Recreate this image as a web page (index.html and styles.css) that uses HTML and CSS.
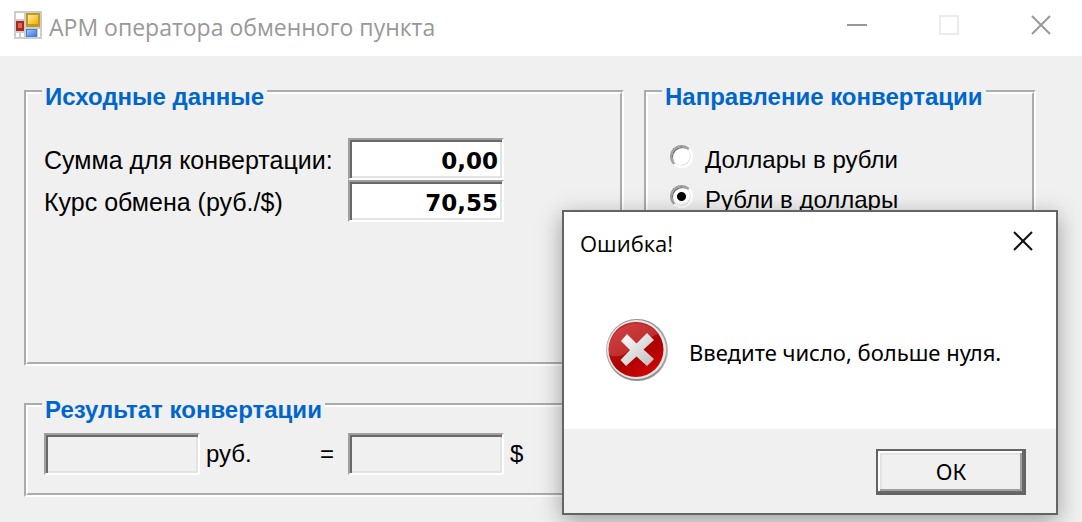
FILE: index.html
```html
<!DOCTYPE html>
<html lang="ru">
<head>
    <meta charset="UTF-8">
    <meta name="viewport" content="width=device-width, initial-scale=1.0">
    <title>АРМ оператора обменного пункта</title>
    <link rel="stylesheet" href="styles.css">
</head>
<body>
    <header class="titlebar">
        <svg class="app-icon" viewBox="0 0 28 28" aria-hidden="true">
            <defs>
                <linearGradient id="gold" x1="0" y1="0" x2="1" y2="1">
                    <stop offset="0" stop-color="#ffe9a0"/>
                    <stop offset="1" stop-color="#f0b000"/>
                </linearGradient>
                <linearGradient id="blue" x1="0" y1="0" x2="1" y2="1">
                    <stop offset="0" stop-color="#9cc4ff"/>
                    <stop offset="1" stop-color="#3d78dc"/>
                </linearGradient>
            </defs>
            <rect width="28" height="28" rx="1" fill="#cdcdcd"/>
            <rect x="2" y="2" width="8" height="6" fill="#fff"/>
            <rect x="2" y="22" width="3" height="4" fill="#fff"/>
            <rect x="7" y="22" width="3" height="4" fill="#fff"/>
            <rect x="24" y="18" width="2" height="8" fill="#fff"/>
            <rect x="12" y="2" width="14" height="14" fill="#c29a20"/>
            <rect x="14" y="4" width="10" height="9" fill="url(#gold)"/>
            <rect x="2" y="10" width="8" height="10" fill="#b0261c"/>
            <rect x="4" y="12" width="4" height="5" fill="#d8665c"/>
            <rect x="12" y="18" width="11" height="8" fill="#4a7fd6"/>
            <rect x="13" y="19" width="9" height="6" fill="url(#blue)"/>
        </svg>
        <h1>АРМ оператора обменного пункта</h1>
        <div class="window-buttons">
            <button type="button" aria-label="Свернуть">
                <svg viewBox="0 0 20 20"><path d="M0 10h20" stroke="#999" stroke-width="2"/></svg>
            </button>
            <button type="button" aria-label="Развернуть" disabled>
                <svg viewBox="0 0 20 20"><rect x="1" y="1" width="18" height="18" fill="none" stroke="#ebebeb" stroke-width="2"/></svg>
            </button>
            <button type="button" aria-label="Закрыть">
                <svg viewBox="0 0 20 20"><path d="M1 1l18 18M19 1L1 19" stroke="#999" stroke-width="2"/></svg>
            </button>
        </div>
    </header>

    <form class="main-form">
        <fieldset class="source">
            <legend>Исходные данные</legend>
            <div class="field">
                <label for="amount">Сумма для конвертации:</label>
                <input type="text" id="amount" name="amount" value="0,00">
            </div>
            <div class="field">
                <label for="rate">Курс обмена (руб./$)</label>
                <input type="text" id="rate" name="rate" value="70,55">
            </div>
        </fieldset>

        <fieldset class="direction">
            <legend>Направление конвертации</legend>
            <label class="option">
                <input type="radio" name="direction" value="usd-rub">
                Доллары в рубли
            </label>
            <label class="option">
                <input type="radio" name="direction" value="rub-usd" checked>
                Рубли в доллары
            </label>
        </fieldset>

        <fieldset class="result">
            <legend>Результат конвертации</legend>
            <div class="result-row">
                <input type="text" id="from" readonly>
                <div class="unit">
                    <label for="from">руб.</label>
                    <span>=</span>
                </div>
                <input type="text" id="to" readonly>
                <label for="to">$</label>
            </div>
        </fieldset>
    </form>

    <div class="dialog" role="alertdialog" aria-labelledby="dialogTitle" aria-describedby="dialogText">
        <div class="dialog-title">
            <h2 id="dialogTitle">Ошибка!</h2>
            <button type="button" aria-label="Закрыть">
                <svg viewBox="0 0 20 20"><path d="M1 1l18 18M19 1L1 19" stroke="#111" stroke-width="2"/></svg>
            </button>
        </div>
        <div class="dialog-body">
            <svg class="error-icon" viewBox="0 0 64 64" aria-hidden="true">
                <defs>
                    <linearGradient id="rim" x1="0" y1="0" x2="0" y2="1">
                        <stop offset="0" stop-color="#8e8e8e"/>
                        <stop offset="0.5" stop-color="#b4b4b4"/>
                        <stop offset="1" stop-color="#8c8c8c"/>
                    </linearGradient>
                    <linearGradient id="red" x1="0.2" y1="0" x2="0.8" y2="1">
                        <stop offset="0" stop-color="#c81e1e"/>
                        <stop offset="0.6" stop-color="#ae0000"/>
                        <stop offset="1" stop-color="#d40808"/>
                    </linearGradient>
                    <linearGradient id="cross" x1="0" y1="0" x2="1" y2="1">
                        <stop offset="0" stop-color="#fff"/>
                        <stop offset="1" stop-color="#bdbdbd"/>
                    </linearGradient>
                </defs>
                <circle cx="32" cy="32" r="31" fill="url(#rim)"/>
                <circle cx="31.500" cy="31.500" r="29.500" fill="#e8e8e8"/>
                <circle cx="31" cy="31.500" r="27.500" fill="url(#red)"/>
                <path d="M4 37a27.500 27.500 0 0 1 49-21C40 21 28 28 21 35c-6 4-11 4-17 2z" fill="#fff" opacity=".16"/>
                <path d="M22 16l9.500 9.500L42 15l7 7-10.500 9.500L49 41l-7 7-10.500-9.500L21 48l-5.500-6L25 32l-9-9z" fill="url(#cross)"/>
            </svg>
            <p id="dialogText">Введите число, больше нуля.</p>
        </div>
        <div class="dialog-footer">
            <button type="button" class="ok">ОК</button>
        </div>
    </div>
</body>
</html>
```
FILE: styles.css
```css
* {
    box-sizing: border-box;
}

body {
    margin: 0;
    min-height: 100vh;
    position: relative;
    background: #f0f0f0;
    color: #000;
    font-family: "Liberation Sans", Arial, sans-serif;
    font-size: 24px;
    line-height: 28px;
}

/* Title bar */
.titlebar {
    display: flex;
    align-items: center;
    height: 56px;
    padding: 0 31px 6px 14px;
    background: #fff;
    color: #999;
}

.titlebar h1,
.dialog-title h2 {
    margin: 0;
    font-family: "Open Sans", "Noto Sans", sans-serif;
    font-size: 23px;
    font-weight: 400;
}

.titlebar h1 {
    flex: 1;
    padding: 4px 0 0 7px;
}

.app-icon {
    width: 28px;
    height: 28px;
}

.window-buttons {
    display: flex;
    gap: 72px;
}

.titlebar button,
.dialog-title button {
    width: 20px;
    height: 20px;
    padding: 0;
    border: none;
    background: none;
}

.titlebar svg,
.dialog-title svg {
    display: block;
}

/* Group boxes */
.main-form {
    display: grid;
    grid-template-columns: 75fr 49fr;
    gap: 22px 20px;
    padding: 19px 46px 24px 24px;
}

fieldset {
    margin: 0;
    min-width: 0;
    border: 4px groove #fff;
    padding: 29px 14px 20px;
}

legend {
    height: 34px;
    padding: 8px 3px 0;
    color: #0066cc;
    font-weight: 700;
}

.source {
    min-height: 291px;
}

.result {
    grid-column: 1 / -1;
    padding-top: 11px;
    padding-bottom: 18px;
}

.field {
    display: flex;
    align-items: center;
    padding-left: 2px;
}

.field label {
    width: 304px;
    padding-top: 2px;
    font-size: 25px;
}

input[type="text"] {
    width: 156px;
    height: 42px;
    padding: 6px 4px 2px;
    border: 2px solid;
    border-color: #a0a0a0 #fff #fff #a0a0a0;
    border-radius: 0;
    background: #fff;
    box-shadow: inset 2px 2px #696969, inset -2px -2px #e3e3e3;
    color: #000;
    font-family: "DejaVu Sans", Verdana, sans-serif;
    font-size: 23px;
    font-weight: 700;
    text-align: right;
}

input[type="text"]:read-only {
    background: #f0f0f0;
}

.direction {
    padding-top: 31px;
}

.option {
    display: flex;
    align-items: center;
    gap: 12px;
    height: 40px;
    padding-left: 8px;
}

input[type="radio"] {
    appearance: none;
    width: 23px;
    height: 23px;
    margin: 0 0 8px;
    border: 2px solid;
    border-color: #a0a0a0 #fff #fff #a0a0a0;
    border-radius: 50%;
    background: #fff;
    box-shadow: inset 1px 1px #696969, inset -1px -1px #e3e3e3;
}

input[type="radio"]:checked {
    background: radial-gradient(circle, #000 4px, #fff 5px);
}

.result-row {
    display: grid;
    grid-template-columns: 156px 148px 156px auto;
    align-items: center;
    padding-left: 2px;
}

.unit {
    display: flex;
    justify-content: space-between;
    padding: 0 14px 0 6px;
}

.result-row > label {
    padding-left: 6px;
}

/* Error message box */
.dialog {
    position: absolute;
    top: 210px;
    right: 24px;
    width: 496px;
    border: 2px solid #646464;
    background: #fff;
    box-shadow: 0 6px 22px rgba(0, 0, 0, 0.35);
}

.dialog-title {
    display: flex;
    align-items: center;
    justify-content: space-between;
    height: 60px;
    padding: 0 23px 2px 16px;
}

.dialog-title h2 {
    padding-top: 4px;
    font-size: 22px;
}

.dialog-body {
    display: flex;
    align-items: center;
    gap: 20px;
    height: 157px;
    padding: 0 41px 2px;
}

.dialog-body p {
    margin: 0;
    padding-top: 4px;
    font-family: "Noto Sans", Tahoma, sans-serif;
    font-size: 22px;
}

.error-icon {
    flex: none;
    width: 64px;
    height: 64px;
}

.dialog-footer {
    display: flex;
    justify-content: flex-end;
    padding: 20px 30px 18px;
    background: #f0f0f0;
}

.ok {
    width: 150px;
    height: 46px;
    padding: 0 0 2px;
    border: 2px solid #646464;
    background: #f0f0f0;
    box-shadow: inset -2px -2px #696969, inset 2px 2px #fff, inset -4px -4px #a0a0a0, inset 4px 4px #e3e3e3;
    color: #000;
    font-family: "Noto Sans", Tahoma, sans-serif;
    font-size: 22px;
}
```
